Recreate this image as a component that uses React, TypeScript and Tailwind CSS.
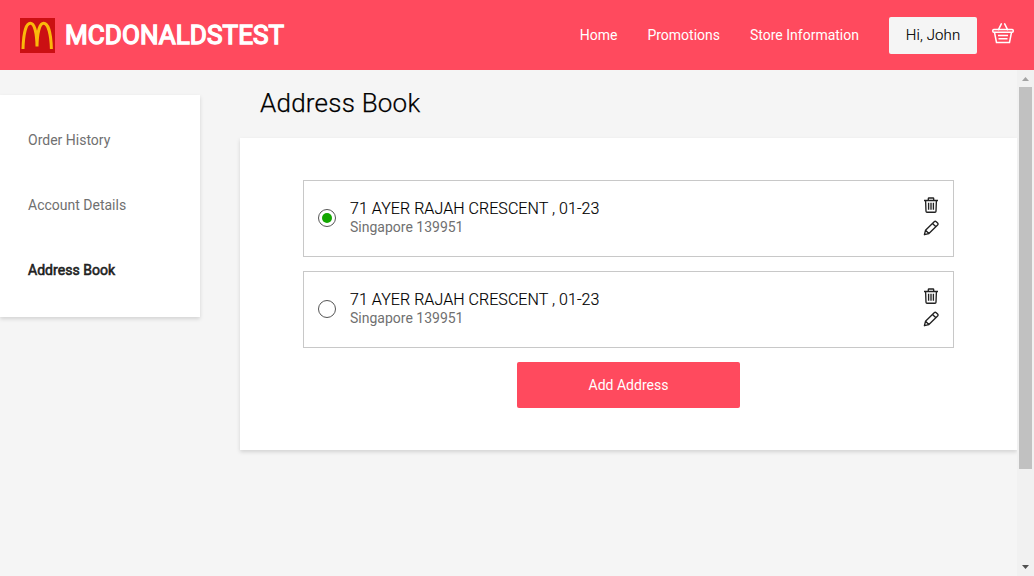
import React from "react";

function Logo() {
  return (
    <svg viewBox="0 0 35 35" className="h-[35px] w-[35px] shrink-0">
      <rect width="35" height="35" fill="#cb1013" />
      <path
        d="M3 31C3.400 17 5.600 5.300 10.300 5.300C14.500 5.300 16.800 15 17 28.500C17.200 15 19.500 5.300 23.700 5.300C28.400 5.300 31 17 31.400 31"
        fill="none"
        stroke="#fbb80b"
        strokeWidth="3"
      />
    </svg>
  );
}

function BasketIcon() {
  return (
    <svg viewBox="0 0 22 22" className="ml-[15px] h-[22px] w-[22px] shrink-0 -translate-y-px" fill="none" stroke="#fff" strokeWidth="1.500">
      <path d="M6.500 6.600L9.300 .9M15.500 6.600L12.700 .9" strokeLinecap="round" />
      <rect x=".8" y="6.600" width="20.400" height="2.700" rx="1" />
      <path d="M2.500 9.300L4.500 19.400H17.500L19.500 9.300M6 12.500H16M6.500 15.700H15.500" />
    </svg>
  );
}

function TrashIcon() {
  return (
    <svg viewBox="0 0 16 16" className="h-4 w-4" fill="none" stroke="#222" strokeWidth="1.350">
      <path d="M1 3.500H15M5.300 3.300V1.700Q5.300 1 6 1H10Q10.700 1 10.700 1.700V3.300M2.600 3.700L3 14.200Q3.100 15.200 4 15.200H12Q12.900 15.200 13 14.200L13.400 3.700M5.600 5.800V12.800M8 5.800V12.800M10.400 5.800V12.800" />
    </svg>
  );
}

function PencilIcon() {
  return (
    <svg viewBox="0 0 16 16" className="h-4 w-4" fill="none" stroke="#222" strokeWidth="1.350" strokeLinejoin="round">
      <path d="M1.400 14.700L2.500 10.300L11.200 1.700Q12.200 .8 13.200 1.700L14.600 3.100Q15.500 4 14.600 5L5.900 13.600ZM2.500 10.300L5.900 13.600M9.500 3.400L12.900 6.800" />
    </svg>
  );
}

function AddressRow({ selected }: { selected: boolean }) {
  return (
    <div className="flex h-[77px] border border-[#c8c8c8] pl-[14px] pr-[14px]">
      <span className="mt-7 flex h-[18px] w-[18px] items-center justify-center rounded-full border border-[#555]">
        {selected && <span className="h-[10px] w-[10px] rounded-full bg-[#12a600]" />}
      </span>
      <div className="ml-[14px] flex-1 pt-[18px]">
        <div className="text-[16px] font-light leading-[19px] tracking-[0.06px] text-black [-webkit-text-stroke:0.15px_#000]">
          71 AYER RAJAH CRESCENT , 01-23
        </div>
        <div className="text-[14px] leading-[18px] text-[#707070]">Singapore 139951</div>
      </div>
      <div className="flex flex-col gap-[7px] pt-4">
        <TrashIcon />
        <PencilIcon />
      </div>
    </div>
  );
}

export default function App() {
  return (
    <div className="flex h-[576px] w-[1034px] flex-col overflow-hidden bg-[#f5f5f5] font-['Roboto',sans-serif]">
      <header className="flex h-[70px] shrink-0 items-center bg-[#ff4a5e] pl-5 pr-5 text-white">
        <Logo />
        <h1 className="ml-[10px] text-[26px] font-normal leading-[30px] tracking-[0.08px] [-webkit-text-stroke:1.4px_white]">MCDONALDSTEST</h1>
        <nav className="ml-auto flex gap-[30px] text-[14px]">
          <a>Home</a>
          <a>Promotions</a>
          <a>Store Information</a>
        </nav>
        <button className="ml-[30px] h-[37px] w-[88px] rounded-[2px] bg-[#f5f5f5] pt-px text-[15px] font-light tracking-[0.1px] text-black [-webkit-text-stroke:0.15px_#000]">
          Hi, John
        </button>
        <BasketIcon />
      </header>
      <div className="flex flex-1">
        <aside className="mt-[25px] h-[222px] w-[200px] shrink-0 bg-white pl-7 pt-[35px] text-[14px] leading-5 text-[#707070] shadow-[0_2px_4px_rgba(0,0,0,0.14)]">
          <div className="flex flex-col gap-[45px]">
            <a>Order History</a>
            <a>Account Details</a>
            <a className="tracking-[0.04px] text-[#222] [-webkit-text-stroke:0.6px_#222]">Address Book</a>
          </div>
        </aside>
        <div className="flex-1 overflow-hidden pl-10">
          <h2 className="h-[68px] pl-5 pt-[17px] text-[26px] font-light leading-8 tracking-[0.23px] text-black [-webkit-text-stroke:0.25px_#000]">
            Address Book
          </h2>
          <main className="flex h-[312px] flex-col gap-[14px] bg-white pl-[63px] pr-[63px] pt-[42px] shadow-[0_2px_4px_rgba(0,0,0,0.14)]">
            <AddressRow selected />
            <AddressRow selected={false} />
            <button className="h-[46px] w-[223px] self-center rounded-[2px] bg-[#ff4a5e] text-[14px] text-white">
              Add Address
            </button>
          </main>
        </div>
        <div className="flex w-[17px] shrink-0 flex-col items-center bg-[#f1f1f1]">
          <svg viewBox="0 0 17 17" className="h-[17px] w-[17px]">
            <path d="M5 11L8.500 7L12 11Z" fill="#a3a3a3" />
          </svg>
          <div className="h-[382px] w-[13px] bg-[#c1c1c1]" />
          <svg viewBox="0 0 17 17" className="mt-auto h-[17px] w-[17px]">
            <path d="M5 6L8.500 10L12 6Z" fill="#505050" />
          </svg>
        </div>
      </div>
    </div>
  );
}
